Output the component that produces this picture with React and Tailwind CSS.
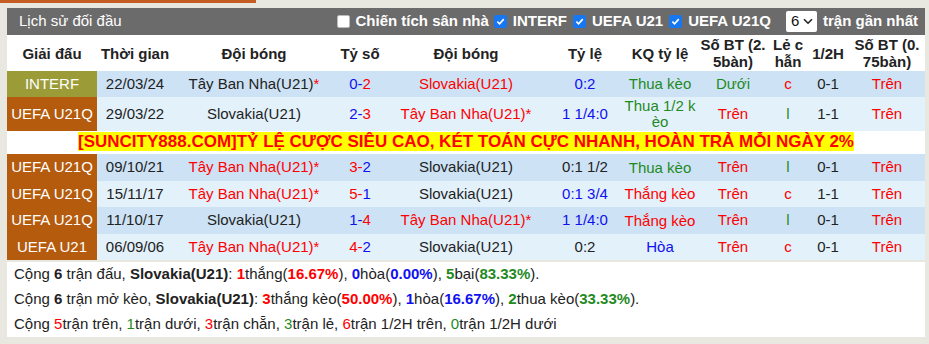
import React from 'react';

const RED = 'text-[#f00]';
const BLUE = 'text-[#1010f0]';
const GREEN = 'text-[#1f8a1f]';
const DARK = 'text-[#222]';

const rows = [
  {
    league: 'INTERF', leagueBg: 'bg-[#9b9b37]', date: '22/03/24', h: 'h-[26px]',
    home: 'Tây Ban Nha(U21)', homeStar: true, homeRed: false,
    s1: '0', s1c: BLUE, s2: '2', s2c: RED,
    away: 'Slovakia(U21)', awayStar: false, awayRed: true,
    ratio: '0:2', ratioC: BLUE, kq: 'Thua kèo', kqC: GREEN,
    bt: 'Dưới', btC: GREEN, le: 'c', leC: RED, half: '0-1', last: 'Trên',
  },
  {
    league: 'UEFA U21Q', leagueBg: 'bg-[#b45b0e]', date: '29/03/22', h: 'h-[34px]',
    home: 'Slovakia(U21)', homeStar: false, homeRed: false,
    s1: '2', s1c: BLUE, s2: '3', s2c: RED,
    away: 'Tây Ban Nha(U21)', awayStar: true, awayRed: true,
    ratio: '1 1/4:0', ratioC: BLUE, kq: 'Thua 1/2 k', kq2: 'èo', kqC: GREEN,
    bt: 'Trên', btC: RED, le: 'l', leC: GREEN, half: '1-1', last: 'Trên',
  },
  'ad',
  {
    league: 'UEFA U21Q', leagueBg: 'bg-[#b45b0e]', date: '09/10/21', h: 'h-[27px]',
    home: 'Tây Ban Nha(U21)', homeStar: true, homeRed: true,
    s1: '3', s1c: RED, s2: '2', s2c: BLUE,
    away: 'Slovakia(U21)', awayStar: false, awayRed: false,
    ratio: '0:1 1/2', ratioC: DARK, kq: 'Thua kèo', kqC: GREEN,
    bt: 'Trên', btC: RED, le: 'l', leC: GREEN, half: '0-1', last: 'Trên',
  },
  {
    league: 'UEFA U21Q', leagueBg: 'bg-[#b45b0e]', date: '15/11/17', h: 'h-[26px]',
    home: 'Tây Ban Nha(U21)', homeStar: true, homeRed: true,
    s1: '5', s1c: RED, s2: '1', s2c: BLUE,
    away: 'Slovakia(U21)', awayStar: false, awayRed: false,
    ratio: '0:1 3/4', ratioC: BLUE, kq: 'Thắng kèo', kqC: RED,
    bt: 'Trên', btC: RED, le: 'c', leC: RED, half: '1-1', last: 'Trên',
  },
  {
    league: 'UEFA U21Q', leagueBg: 'bg-[#b45b0e]', date: '11/10/17', h: 'h-[27px]',
    home: 'Slovakia(U21)', homeStar: false, homeRed: false,
    s1: '1', s1c: BLUE, s2: '4', s2c: RED,
    away: 'Tây Ban Nha(U21)', awayStar: true, awayRed: true,
    ratio: '1 1/4:0', ratioC: BLUE, kq: 'Thắng kèo', kqC: RED,
    bt: 'Trên', btC: RED, le: 'l', leC: GREEN, half: '0-1', last: 'Trên',
  },
  {
    league: 'UEFA U21', leagueBg: 'bg-[#b45b0e]', date: '06/09/06', h: 'h-[26px]',
    home: 'Tây Ban Nha(U21)', homeStar: true, homeRed: true,
    s1: '4', s1c: RED, s2: '2', s2c: BLUE,
    away: 'Slovakia(U21)', awayStar: false, awayRed: false,
    ratio: '0:2', ratioC: DARK, kq: 'Hòa', kqC: BLUE,
    bt: 'Trên', btC: RED, le: 'c', leC: RED, half: '0-1', last: 'Trên',
  },
];

function Check({ on }) {
  if (!on) {
    return <span className="w-[13px] h-[13px] rounded-[2px] bg-white border border-[#bbb] shrink-0" />;
  }
  return (
    <span className="w-[13px] h-[13px] rounded-[2px] bg-[#1677f0] shrink-0 flex items-center justify-center">
      <svg width="9" height="9" viewBox="0 0 10 10">
        <path d="M1.5 5.2 L4 7.6 L8.6 2.4" stroke="white" strokeWidth="1.8" fill="none" />
      </svg>
    </span>
  );
}

function Team({ name, star, red }) {
  return (
    <span className={red ? RED : DARK}>
      {name}
      {star && <span className={RED}>*</span>}
    </span>
  );
}

export default function App() {
  let stripe = 0;
  return (
    <div
      className="w-[929px] h-[344px] bg-[#e8e8e0] text-[15px] text-[#222] overflow-hidden"
      style={{ fontFamily: '"Liberation Sans", Arial, sans-serif' }}
    >
      <div className="w-[256px] h-[3px] bg-[#c65d22]" />

      <div className="mt-[5px] ml-[7px] w-[918px]">
        {/* Title bar */}
        <div className="h-[27px] bg-[#6b6b6b] text-white flex items-center justify-between pl-[12px] pr-[7px]">
          <span>Lịch sử đối đầu</span>
          <div className="flex items-center font-bold">
            <Check on={false} />
            <span className="ml-[6px] mr-[5px]">Chiến tích sân nhà</span>
            <Check on />
            <span className="ml-[6px] mr-[6px]">INTERF</span>
            <Check on />
            <span className="ml-[6px] mr-[6px]">UEFA U21</span>
            <Check on />
            <span className="ml-[6px]">UEFA U21Q</span>
            <span className="ml-[15px] w-[31px] h-[21px] bg-white rounded-[2px] text-[#111] font-normal flex items-center justify-between pl-[5px] pr-[4px]">
              6
              <svg width="10" height="7" viewBox="0 0 10 7">
                <path d="M1 1.2 L5 5.2 L9 1.2" stroke="#222" strokeWidth="1.6" fill="none" />
              </svg>
            </span>
            <span className="ml-[6px]">trận gần nhất</span>
          </div>
        </div>

        {/* Table */}
        <table className="w-full table-fixed border-collapse">
          <colgroup>
            <col className="w-[90px]" />
            <col className="w-[76px]" />
            <col className="w-[162px]" />
            <col className="w-[50px]" />
            <col className="w-[162px]" />
            <col className="w-[76px]" />
            <col className="w-[74px]" />
            <col className="w-[72px]" />
            <col className="w-[38px]" />
            <col className="w-[42px]" />
            <col className="w-[76px]" />
          </colgroup>
          <thead>
            <tr className="h-[36px] bg-white font-bold text-center leading-[17px]">
              <th className="p-0">Giải đấu</th>
              <th className="p-0">Thời gian</th>
              <th className="p-0">Đội bóng</th>
              <th className="p-0">Tỷ số</th>
              <th className="p-0">Đội bóng</th>
              <th className="p-0">Tỷ lệ</th>
              <th className="p-0">KQ tỷ lệ</th>
              <th className="p-0">Số BT (2.<br />5bàn)</th>
              <th className="p-0">Lẻ c<br />hẫn</th>
              <th className="p-0">1/2H</th>
              <th className="p-0">Số BT (0.<br />75bàn)</th>
            </tr>
          </thead>
          <tbody>
            {rows.map((r, i) => {
              if (r === 'ad') {
                return (
                  <tr key={i} className="h-[23px] bg-white">
                    <td colSpan={11} className="p-0 text-center">
                      <span className="bg-[#ffff00] text-[#f00] font-bold text-[17px] leading-[19px] inline-block">
                        [SUNCITY888.COM]TỶ LỆ CƯỢC SIÊU CAO, KÉT TOÁN CỰC NHANH, HOÀN TRẢ MỖI NGÀY 2%
                      </span>
                    </td>
                  </tr>
                );
              }
              const dark = stripe % 2 === 0;
              stripe += 1;
              return (
                <tr
                  key={i}
                  className={`${r.h} ${dark ? 'bg-[#cde3f5]' : 'bg-[#e3f1fb]'} text-center whitespace-nowrap`}
                >
                  <td className={`p-0 text-white ${r.leagueBg}`}>{r.league}</td>
                  <td className="p-0">{r.date}</td>
                  <td className="p-0"><Team name={r.home} star={r.homeStar} red={r.homeRed} /></td>
                  <td className="p-0">
                    <span className={r.s1c}>{r.s1}</span>
                    <span className={r.s1c}>-</span>
                    <span className={r.s2c}>{r.s2}</span>
                  </td>
                  <td className="p-0"><Team name={r.away} star={r.awayStar} red={r.awayRed} /></td>
                  <td className={`p-0 ${r.ratioC}`}>{r.ratio}</td>
                  <td className={`p-0 leading-[16px] ${r.kqC}`}>
                    {r.kq}
                    {r.kq2 && <><br />{r.kq2}</>}
                  </td>
                  <td className={`p-0 ${r.btC}`}>{r.bt}</td>
                  <td className={`p-0 ${r.leC}`}>{r.le}</td>
                  <td className="p-0">{r.half}</td>
                  <td className={`p-0 ${RED}`}>{r.last}</td>
                </tr>
              );
            })}
          </tbody>
        </table>

        {/* Summary */}
        <div className="mt-[2px] bg-white px-[7px] h-[75px] flex flex-col">
          <div className="h-[25px] flex items-center">
            <span>
              Cộng <b>6</b> trận đấu, <b>Slovakia(U21)</b>: <b className={RED}>1</b>thắng(<b className={RED}>16.67%</b>), <b className={BLUE}>0</b>hòa(<b className={BLUE}>0.00%</b>), <b className={GREEN}>5</b>bại(<b className={GREEN}>83.33%</b>).
            </span>
          </div>
          <div className="h-[25px] flex items-center">
            <span>
              Cộng <b>6</b> trận mở kèo, <b>Slovakia(U21)</b>: <b className={RED}>3</b>thắng kèo(<b className={RED}>50.00%</b>), <b className={BLUE}>1</b>hòa(<b className={BLUE}>16.67%</b>), <b className={GREEN}>2</b>thua kèo(<b className={GREEN}>33.33%</b>).
            </span>
          </div>
          <div className="h-[25px] flex items-center">
            <span>
              Cộng <span className={RED}>5</span>trận trên, <span className={GREEN}>1</span>trận dưới, <span className={RED}>3</span>trận chẵn, <span className={GREEN}>3</span>trận lẻ, <span className={RED}>6</span>trận 1/2H trên, <span className={GREEN}>0</span>trận 1/2H dưới
            </span>
          </div>
        </div>
      </div>
    </div>
  );
}
